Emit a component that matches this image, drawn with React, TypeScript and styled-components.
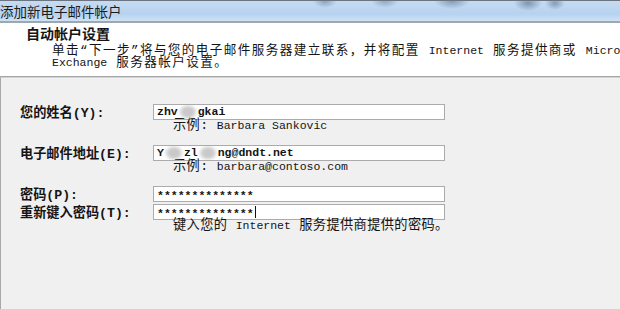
import React from "react";
import styled, { createGlobalStyle } from "styled-components";

const GlobalStyle = createGlobalStyle`
  body {
    margin: 0;
    background: #f0f0f0;
    font-family: "Liberation Mono", "Noto Sans CJK SC", monospace;
    color: #141414;
  }
`;

const Window = styled.div`
  width: 620px;
  height: 309px;
  overflow: hidden;
  display: flex;
  flex-direction: column;
  background: #f0f0f0;
`;

const TitleBar = styled.div`
  height: 20px;
  border-top: 1px solid #6b7480;
  border-bottom: 2px solid #9ea6ae;
  background:
    radial-gradient(ellipse 12px 7px at 325px 0px, rgba(70, 90, 120, 0.45), transparent),
    radial-gradient(ellipse 14px 7px at 385px 0px, rgba(70, 90, 120, 0.4), transparent),
    radial-gradient(ellipse 18px 8px at 452px 0px, rgba(70, 90, 120, 0.5), transparent),
    radial-gradient(ellipse 14px 8px at 528px 2px, rgba(70, 90, 120, 0.55), transparent),
    radial-gradient(ellipse 10px 7px at 555px 2px, rgba(70, 90, 120, 0.5), transparent),
    linear-gradient(to bottom, #c6dbf1, #b7d2ef 65%, #cfe2f5);
  font-family: "Noto Sans CJK SC", sans-serif;
  font-size: 13.5px;
  line-height: 20px;
  color: #1c1c1c;
  white-space: nowrap;
`;

const Header = styled.div`
  height: 54px;
  background: #fff;
  border-bottom: 1px solid #a5a5a5;
  padding: 3px 0 0 26px;
  box-sizing: border-box;
  white-space: nowrap;
  overflow: hidden;
`;

const HeaderTitle = styled.div`
  font-family: "Noto Sans CJK SC", sans-serif;
  font-weight: bold;
  font-size: 14px;
  line-height: 14px;
`;

const Desc = styled.div`
  margin-top: 5px;
  padding-left: 26px;
  font-size: 12.6px;
  letter-spacing: 1.4px;
  line-height: 12px;
`;

const Latin = styled.span`
  font-family: "Liberation Mono", monospace;
  font-size: 11.5px;
  letter-spacing: 0;
`;

const Form = styled.div`
  flex: 1;
  border-top: 1px solid #d4d4d4;
  border-left: 1px solid #a8a8a8;
  padding: 24px 0 0 19px;
`;

const Field = styled.div<{ $gap?: number }>`
  display: grid;
  grid-template-columns: 133px 292px;
  align-items: center;
  height: 16px;
  margin-top: ${(p) => p.$gap ?? 0}px;
`;

const Label = styled.div`
  font-weight: bold;
  font-size: 13.2px;
  line-height: 16px;
  padding-top: 4px;
  white-space: nowrap;
`;

const Box = styled.div`
  height: 16px;
  box-sizing: border-box;
  border: 1px solid #ababab;
  background: #fff;
  padding-left: 3px;
  font-family: "Liberation Mono", monospace;
  font-weight: bold;
  font-size: 11.5px;
  line-height: 14px;
  white-space: nowrap;
  overflow: hidden;
  display: flex;
  align-items: center;
`;

const Blob = styled.span<{ $w: number }>`
  display: inline-block;
  width: ${(p) => p.$w}px;
  height: 16px;
  margin: -2px 0;
  background: radial-gradient(ellipse at center, #c9c9c9 35%, rgba(255, 255, 255, 0) 72%);
  filter: blur(1px);
`;

const Stars = styled.span`
  padding-top: 4px;
`;

const Caret = styled.span`
  display: inline-block;
  width: 0;
  height: 12px;
  border-left: 1px solid #111;
  margin-left: 1px;
`;

const Note = styled.div`
  margin-left: 153px;
  height: 14px;
  margin-top: 1px;
  font-size: 13.2px;
  letter-spacing: 0.4px;
  line-height: 14px;
  white-space: nowrap;
`;

export default function App() {
  return (
    <>
      <GlobalStyle />
      <Window>
        <TitleBar>添加新电子邮件帐户</TitleBar>
        <Header>
          <HeaderTitle>自动帐户设置</HeaderTitle>
          <Desc>
            单击“下一步”将与您的电子邮件服务器建立联系，并将配置 <Latin>Internet</Latin> 服务提供商或{" "}
            <Latin>Microsoft</Latin>
            <br />
            <Latin>Exchange</Latin> 服务器帐户设置。
          </Desc>
        </Header>
        <Form>
          <Field>
            <Label>您的姓名(Y):</Label>
            <Box>
              zhv<Blob $w={20} />gkai
            </Box>
          </Field>
          <Note>
            示例: <Latin>Barbara Sankovic</Latin>
          </Note>

          <Field $gap={10}>
            <Label>电子邮件地址(E):</Label>
            <Box>
              Y<Blob $w={20} /> zl<Blob $w={20} />ng@dndt.net
            </Box>
          </Field>
          <Note>
            示例: <Latin>barbara@contoso.com</Latin>
          </Note>

          <Field $gap={10}>
            <Label>密码(P):</Label>
            <Box>
              <Stars>**************</Stars>
            </Box>
          </Field>
          <Field $gap={2}>
            <Label>重新键入密码(T):</Label>
            <Box>
              <Stars>**************</Stars>
              <Caret />
            </Box>
          </Field>
          <Note>
            键入您的 <Latin>Internet</Latin> 服务提供商提供的密码。
          </Note>
        </Form>
      </Window>
    </>
  );
}
